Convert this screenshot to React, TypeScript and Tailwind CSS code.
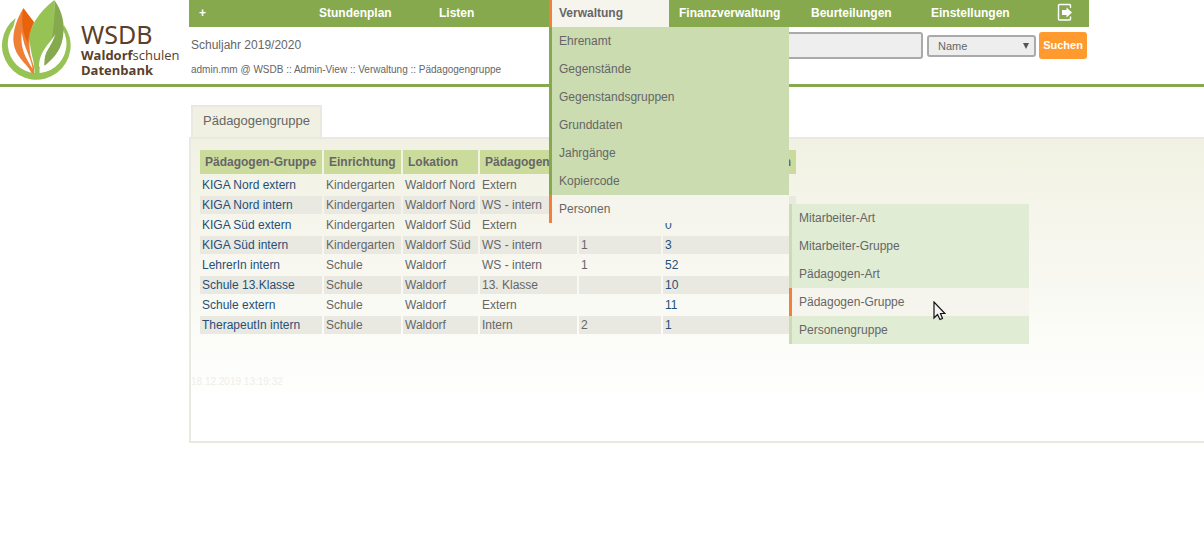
import { useState } from "react";

interface NavItem {
    label: string;
    active?: boolean;
}

interface GroupRow {
    name: string;
    facility: string;
    location: string;
    type: string;
    order: string;
    count: string;
}

const navBefore: NavItem[] = [{ label: "+" }, { label: "Stundenplan" }, { label: "Listen" }];
const navAfter: NavItem[] = [{ label: "Beurteilungen" }, { label: "Einstellungen" }];

const menuItems = ["Ehrenamt", "Gegenstände", "Gegenstandsgruppen", "Grunddaten", "Jahrgänge", "Kopiercode"];

const subMenuItems: NavItem[] = [
    { label: "Mitarbeiter-Art" },
    { label: "Mitarbeiter-Gruppe" },
    { label: "Pädagogen-Art" },
    { label: "Pädagogen-Gruppe", active: true },
    { label: "Personengruppe" },
];

const columns = [
    { label: "Pädagogen-Gruppe", width: "w-[122px]" },
    { label: "Einrichtung", width: "w-[77px]" },
    { label: "Lokation", width: "w-[75px]" },
    { label: "Pädagogen-Art", width: "w-[97px]" },
    { label: "Reihenfolge", width: "w-[82px]" },
    { label: "Anzahl Pädagogen", width: "w-[133px]" },
];

const rows: GroupRow[] = [
    { name: "KIGA Nord extern", facility: "Kindergarten", location: "Waldorf Nord", type: "Extern", order: "", count: "0" },
    { name: "KIGA Nord intern", facility: "Kindergarten", location: "Waldorf Nord", type: "WS - intern", order: "", count: "3" },
    { name: "KIGA Süd extern", facility: "Kindergarten", location: "Waldorf Süd", type: "Extern", order: "", count: "0" },
    { name: "KIGA Süd intern", facility: "Kindergarten", location: "Waldorf Süd", type: "WS - intern", order: "1", count: "3" },
    { name: "LehrerIn intern", facility: "Schule", location: "Waldorf", type: "WS - intern", order: "1", count: "52" },
    { name: "Schule 13.Klasse", facility: "Schule", location: "Waldorf", type: "13. Klasse", order: "", count: "10" },
    { name: "Schule extern", facility: "Schule", location: "Waldorf", type: "Extern", order: "", count: "11" },
    { name: "TherapeutIn intern", facility: "Schule", location: "Waldorf", type: "Intern", order: "2", count: "1" },
];

function Logo() {
    return (
        <a href="#" className="flex w-[189px] shrink-0 items-start text-[#5a4029]">
            <svg viewBox="0 0 216 240" className="h-20 w-[72px] shrink-0" aria-hidden="true">
                <path d="M47 54 A103 103 0 1 0 191 74 L188 88 A88 88 0 1 1 40 80 Z" fill="#97c355" />
                <path
                    d="M70 25 C50 58 40 90 40 118 C41 170 80 188 94 218 L102 222 L102 200 C92 172 87 150 89 125 C90 104 95 85 102 67 Z"
                    fill="#f07f36"
                />
                <path d="M70 25 C63 62 66 96 84 129 C86 100 93 85 102 67 Z" fill="#e9620c" />
                <path d="M65 96 C60 145 76 172 98 207 C93 170 73 150 65 96 Z" fill="#fff" />
                <path
                    d="M163 0 C112 40 88 82 89 118 C90 158 104 180 104 224 L119 224 C117 190 127 160 144 142 L167 98 Z"
                    fill="#97c355"
                />
                <path d="M163 0 C165 40 163 70 156 115 C139 150 133 162 133 198 C157 176 180 158 188 116 C196 74 188 35 163 0 Z" fill="#85a94d" />
                <path d="M166 101 C150 132 118 150 117 200 C121 202 124 190 133 174 C138 150 157 135 166 101 Z" fill="#fff" />
            </svg>
            <span className="flex flex-col pt-5 pl-[9px] font-['Open_Sans',sans-serif] text-[13px] leading-[15px] font-bold">
                <span className="font-['Noto_Sans',sans-serif] text-[25px] leading-7 font-normal">WSDB</span>
                <span>
                    Waldorf<span className="font-medium">schulen</span>
                </span>
                <span>Datenbank</span>
            </span>
        </a>
    );
}

function NavLink({ label }: NavItem) {
    return (
        <li className="min-w-[120px]">
            <a href="#" className="block pr-2 pl-[10px] text-white hover:text-[#f6f5ed]">
                {label}
            </a>
        </li>
    );
}

function Cursor() {
    return (
        <svg viewBox="0 0 13 20" className="pointer-events-none absolute top-[13px] left-[144px] h-5 w-[13px]" aria-hidden="true">
            <path d="M1 1 V17 L4.5 13.5 L7 18.5 L9.5 17.5 L7.5 12.5 H12 Z" fill="#f4f4f4" stroke="#111" strokeWidth="1.2" />
        </svg>
    );
}

function AdminMenu() {
    return (
        <ul className="absolute top-full left-0 z-10 w-60 font-normal leading-7">
            {menuItems.map((item) => (
                <li key={item}>
                    <a href="#" className="block border-l-3 border-[#87a94e] bg-[#cbdcb1] pl-[7px]">
                        {item}
                    </a>
                </li>
            ))}
            <li className="relative">
                <a href="#" className="block border-l-3 border-[#f0803a] bg-[#f6f5ed] pl-[7px]">
                    Personen
                </a>
                <ul className="absolute top-[9px] left-full w-60">
                    {subMenuItems.map((item) => (
                        <li key={item.label} className={item.active ? "relative z-10" : "relative"}>
                            <a
                                href="#"
                                className={`block border-l-3 pl-[7px] ${
                                    item.active ? "border-[#f0803a] bg-[#f6f5ed]" : "border-[#cbdcb1] bg-[#e1ecd5]"
                                }`}
                            >
                                {item.label}
                            </a>
                            {item.active && <Cursor />}
                        </li>
                    ))}
                </ul>
            </li>
        </ul>
    );
}

export default function App() {
    const [query, setQuery] = useState("");
    const [field, setField] = useState("Name");

    return (
        <div className="min-h-screen overflow-x-clip bg-white font-['Liberation_Sans',Arial,sans-serif] text-xs text-[#666]">
            {/* Header */}
            <header className="flex h-[87px] border-b-3 border-[#87a94e]">
                <Logo />
                <div className="max-w-[900px] flex-1">
                    <nav className="bg-[#87a94e] font-bold leading-[27px]">
                        <ul className="flex">
                            {navBefore.map((item) => (
                                <NavLink key={item.label} {...item} />
                            ))}
                            <li className="relative w-[120px]">
                                <a href="#" className="block border-l-3 border-[#f0803a] bg-[#f6f5ed] pl-[7px]">
                                    Verwaltung
                                </a>
                                <AdminMenu />
                            </li>
                            <li className="w-[132px]">
                                <a href="#" className="block pl-[10px] text-white">
                                    Finanzverwaltung
                                </a>
                            </li>
                            {navAfter.map((item) => (
                                <NavLink key={item.label} {...item} />
                            ))}
                            <li className="flex flex-1 items-start pt-[3px] pl-4">
                                <a href="#" aria-label="Abmelden">
                                    <svg viewBox="0 0 16 18" className="h-[18px] w-4" aria-hidden="true">
                                        <path d="M13.5 5 V2.5 Q13.5 1.5 12.5 1.5 H2.5 Q1.5 1.5 1.5 2.5 V16 Q1.5 17 2.5 17 H12.5 Q13.5 17 13.5 16 V13.5" fill="none" stroke="#fff" strokeWidth="1.4" />
                                        <path d="M5 7 H9.5 V4.5 L15 9.5 L9.5 14.5 V12 H5 Z" fill="#fff" />
                                    </svg>
                                </a>
                            </li>
                        </ul>
                    </nav>

                    <div className="flex justify-between pr-[2px] pl-[2px]">
                        <div>
                            <p className="pt-2.5 leading-4">Schuljahr 2019/2020</p>
                            <p className="pt-[11px] text-[10px] leading-3">
                                admin.mm @ WSDB :: Admin-View :: Verwaltung :: Pädagogengruppe
                            </p>
                        </div>
                        <form className="flex items-center self-start pt-[5px] text-[11px]" onSubmit={(e) => e.preventDefault()}>
                            <input
                                type="text"
                                aria-label="Suchbegriff"
                                value={query}
                                onChange={(e) => setQuery(e.target.value)}
                                className="h-[27px] w-[200px] rounded-[3px] border-2 border-[#aaa] bg-[#eee] px-2"
                            />
                            <span className="relative ml-1 block">
                                <select
                                    aria-label="Suchfeld"
                                    value={field}
                                    onChange={(e) => setField(e.target.value)}
                                    className="block h-[22px] w-[109px] appearance-none rounded-[3px] border-2 border-[#aaa] bg-[#eee] pt-px pl-[9px]"
                                >
                                    <option>Name</option>
                                </select>
                                <svg viewBox="0 0 6 6" className="pointer-events-none absolute top-2 right-[7px] size-1.5" aria-hidden="true">
                                    <path d="M0 0 H6 L3 6 Z" fill="#555" />
                                </svg>
                            </span>
                            <button type="submit" className="ml-[3px] h-[27px] w-12 rounded-[3px] bg-[#ff9a2e] font-bold text-white">
                                Suchen
                            </button>
                        </form>
                    </div>
                </div>
            </header>

            {/* Content */}
            <main className="pt-[18px] pl-[189px]">
                <h1 className="ml-[2px] w-fit border-2 border-b-0 border-[#e9e9e2] bg-[#f1f1e3] px-[10px] pb-[2px] text-[13px] leading-7">
                    Pädagogengruppe
                </h1>
                <div className="border-y-2 border-l-2 border-[#e9e9e2] bg-linear-to-b from-[#f1f1e3] to-white to-[265px] pb-[53px]">
                    <table className="ml-[7px] w-[600px] table-fixed border-separate border-spacing-[2px] pt-[9px] leading-[18px]">
                        <thead>
                            <tr>
                                {columns.map((col) => (
                                    <th key={col.label} className={`h-6 bg-[#cbdb9c] px-[5px] text-left whitespace-nowrap last:text-right ${col.width}`}>
                                        {col.label}
                                    </th>
                                ))}
                            </tr>
                        </thead>
                        <tbody>
                            {rows.map((row) => (
                                <tr key={row.name} className="even:[&>td]:bg-[#e9e9e2]">
                                    <td className="h-[18px] px-[2px]">
                                        <a href="#" className="text-[#264f78]">
                                            {row.name}
                                        </a>
                                    </td>
                                    <td className="px-[2px]">{row.facility}</td>
                                    <td className="px-[2px] whitespace-nowrap">{row.location}</td>
                                    <td className="px-[2px]">{row.type}</td>
                                    <td className="px-[2px]">{row.order}</td>
                                    <td className="px-[2px]">
                                        <a href="#" className="text-[#264f78]">
                                            {row.count}
                                        </a>
                                    </td>
                                </tr>
                            ))}
                        </tbody>
                    </table>
                    <p className="pt-10 text-[10px] leading-3 text-[#eeeee6]">18.12.2019 13:19:32</p>
                </div>
            </main>
        </div>
    );
}
